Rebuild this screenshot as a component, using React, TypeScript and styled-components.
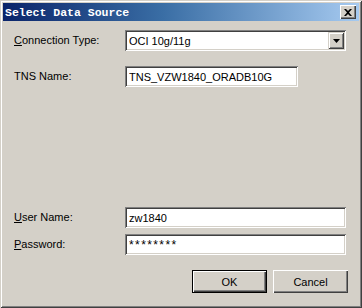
import React from "react";
import styled, { createGlobalStyle } from "styled-components";

const Global = createGlobalStyle`
  html, body { margin: 0; padding: 0; background: #d4d0c8; }
  * { box-sizing: border-box; }
`;

const Window = styled.div`
  width: 362px;
  height: 308px;
  background: #d4d0c8;
  padding: 3px;
  display: flex;
  flex-direction: column;
  box-shadow: inset 1px 1px #d4d0c8, inset -1px -1px #404040,
    inset 2px 2px #ffffff, inset -2px -2px #808080;
  font-family: "Liberation Sans", Arial, sans-serif;
  font-size: 11px;
  color: #000;
`;

const TitleBar = styled.div`
  height: 18px;
  display: flex;
  align-items: center;
  justify-content: space-between;
  padding: 0 3px 0 2px;
  background: linear-gradient(to right, #0a246a 0%, #3a6ea5 45%, #a6caf0 100%);
`;

const Title = styled.span`
  color: #fff;
  font-family: "Liberation Mono", "DejaVu Sans Mono", monospace;
  font-weight: bold;
  font-size: 11.5px;
`;

const CloseBtn = styled.div`
  width: 16px;
  height: 14px;
  background: #d4d0c8;
  display: flex;
  align-items: center;
  justify-content: center;
  box-shadow: inset 1px 1px #ffffff, inset -1px -1px #404040,
    inset -2px -2px #808080;
`;

const Body = styled.div`
  flex: 1;
  display: flex;
  flex-direction: column;
  padding: 9px 11px 0 11px;
`;

const Row = styled.div<{ $mt?: number }>`
  display: flex;
  align-items: center;
  margin-top: ${(p) => p.$mt ?? 0}px;
  height: 21px;
`;

const Label = styled.label`
  width: 111px;
  flex-shrink: 0;
  padding-bottom: 1px;
`;

const Field = styled.div<{ $w: number }>`
  width: ${(p) => p.$w}px;
  height: 21px;
  background: #fff;
  display: flex;
  align-items: center;
  padding: 0 2px 0 4px;
  box-shadow: inset 1px 1px #808080, inset -1px -1px #ffffff,
    inset 2px 2px #404040, inset -2px -2px #d4d0c8;
`;

const FieldText = styled.span<{ $secret?: boolean }>`
  flex: 1;
  white-space: nowrap;
  overflow: hidden;
  ${(p) => (p.$secret ? "font-size: 12px; letter-spacing: 1.4px;" : "")}
`;

const DropBtn = styled.div`
  width: 16px;
  height: 17px;
  background: #d4d0c8;
  display: flex;
  align-items: center;
  justify-content: center;
  box-shadow: inset 1px 1px #d4d0c8, inset -1px -1px #404040,
    inset 2px 2px #ffffff, inset -2px -2px #808080;
`;

const Buttons = styled.div`
  display: flex;
  justify-content: flex-end;
  gap: 6px;
  margin-top: 15px;
`;

const Button = styled.button<{ $default?: boolean }>`
  width: 75px;
  height: 23px;
  background: #d4d0c8;
  border: ${(p) => (p.$default ? "1px solid #000" : "none")};
  padding: 0;
  font-family: "Liberation Sans", Arial, sans-serif;
  font-size: 11px;
  color: #000;
  box-shadow: inset 1px 1px #ffffff, inset -1px -1px #404040,
    inset -2px -2px #808080;
`;

const U = styled.span`
  text-decoration: underline;
`;

export default function App() {
  return (
    <>
      <Global />
      <Window>
        <TitleBar>
          <Title>Select Data Source</Title>
          <CloseBtn>
            <svg width="8" height="7" viewBox="0 0 8 7">
              <path d="M0 0h2l2 2 2-2h2L5 3.5 8 7H6L4 5 2 7H0l3-3.5z" fill="#000" />
            </svg>
          </CloseBtn>
        </TitleBar>
        <Body>
          <Row>
            <Label>
              <U>C</U>onnection Type:
            </Label>
            <Field $w={221}>
              <FieldText>OCI 10g/11g</FieldText>
              <DropBtn>
                <svg width="7" height="4" viewBox="0 0 7 4">
                  <path d="M0 0h7L3.5 4z" fill="#000" />
                </svg>
              </DropBtn>
            </Field>
          </Row>
          <Row $mt={15}>
            <Label>TNS Name:</Label>
            <Field $w={173}>
              <FieldText>TNS_VZW1840_ORADB10G</FieldText>
            </Field>
          </Row>
          <Row $mt={120}>
            <Label>
              <U>U</U>ser Name:
            </Label>
            <Field $w={221}>
              <FieldText>zw1840</FieldText>
            </Field>
          </Row>
          <Row $mt={6}>
            <Label>
              <U>P</U>assword:
            </Label>
            <Field $w={221}>
              <FieldText $secret>********</FieldText>
            </Field>
          </Row>
          <Buttons>
            <Button $default>OK</Button>
            <Button>Cancel</Button>
          </Buttons>
        </Body>
      </Window>
    </>
  );
}
